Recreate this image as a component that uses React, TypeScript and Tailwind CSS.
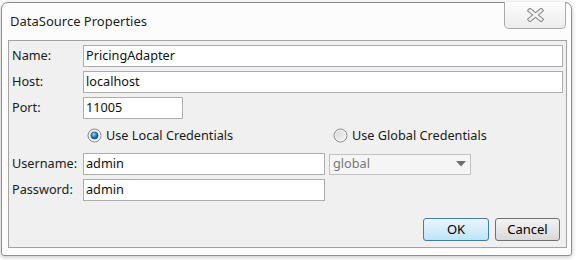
import React from "react";

const font = { fontFamily: '"Segoe UI", "Noto Sans", "Open Sans", sans-serif' };

function Radio({ checked }: { checked: boolean }) {
  const id = checked ? "rc" : "ru";
  return (
    <svg width="15" height="15" viewBox="0 0 15 15" className="shrink-0">
      <defs>
        <linearGradient id={id + "bg"} x1="0" y1="0" x2="1" y2="1">
          <stop offset="0" stopColor="#d4d4d4" />
          <stop offset="1" stopColor="#f8f8f8" />
        </linearGradient>
        <radialGradient id={id + "dot"} cx="0.4" cy="0.35" r="0.7">
          <stop offset="0" stopColor="#9fdcff" />
          <stop offset="0.45" stopColor="#2b8ad0" />
          <stop offset="1" stopColor="#0d3e66" />
        </radialGradient>
      </defs>
      <circle cx="7.5" cy="7.5" r="6.5" fill={`url(#${id}bg)`} stroke="#8c8e90" strokeWidth="1" />
      <circle cx="7.5" cy="7.5" r="5.2" fill="none" stroke="#f6f6f6" strokeWidth="1" />
      {checked && <circle cx="7.5" cy="7.5" r="3.6" fill={`url(#${id}dot)`} stroke="#1b4f7a" strokeWidth="0.6" />}
    </svg>
  );
}

function Field({ value, w }: { value: string; w: string }) {
  return (
    <div className={`${w} h-[22px] bg-white border border-[#abadb3] flex items-center pl-[2px] text-[#111]`}>
      {value}
    </div>
  );
}

export default function App() {
  return (
    <div className="w-[576px] h-[260px] bg-white relative overflow-hidden text-[12.7px] text-[#1a1a1a]" style={font}>
      <div className="absolute left-[1px] top-[2px] w-[571px] h-[254px] border border-[#8f9094] rounded-t-[7px] rounded-b-[3px] bg-[#fcfcfc] shadow-[0_1px_4px_rgba(0,0,0,0.25)] flex flex-col">
        <div className="h-[37px] flex items-start relative shrink-0">
          <div className="pl-[8px] pt-[12px] text-[13px] text-[#1e1e1e] leading-none">DataSource Properties</div>
          <div className="absolute right-[5px] top-[-1px] w-[62px] h-[27px] border border-t-0 border-[#a7a9ac] rounded-b-[5px] bg-gradient-to-b from-[#fdfdfd] to-[#ececec] flex items-center justify-center">
            <svg width="17" height="14" viewBox="0 0 17 14">
              <line x1="3" y1="2.5" x2="14" y2="11.5" stroke="#858789" strokeWidth="4.6" strokeLinecap="square" />
              <line x1="14" y1="2.5" x2="3" y2="11.5" stroke="#858789" strokeWidth="4.6" strokeLinecap="square" />
              <line x1="3" y1="2.5" x2="14" y2="11.5" stroke="#f2f2f2" strokeWidth="2.6" strokeLinecap="square" />
              <line x1="14" y1="2.5" x2="3" y2="11.5" stroke="#f2f2f2" strokeWidth="2.6" strokeLinecap="square" />
            </svg>
          </div>
        </div>
        <div className="ml-[6px] w-[559px] h-[208px] border border-[#a3a3a3] bg-[#f0f0f0] pt-[4px] pl-[3px] pr-[3px] flex flex-col">
          <div className="flex items-center">
            <div className="w-[71px]">Name:</div>
            <Field value="PricingAdapter" w="w-[480px]" />
          </div>
          <div className="flex items-center mt-[4px]">
            <div className="w-[71px]">Host:</div>
            <Field value="localhost" w="w-[480px]" />
          </div>
          <div className="flex items-center mt-[4px]">
            <div className="w-[71px]">Port:</div>
            <Field value="11005" w="w-[100px]" />
          </div>
          <div className="flex items-center h-[26px] mt-[4px]">
            <div className="w-[75px]" />
            <div className="flex items-center gap-[4px] w-[246px]">
              <Radio checked={true} />
              <span>Use Local Credentials</span>
            </div>
            <div className="flex items-center gap-[4px]">
              <Radio checked={false} />
              <span>Use Global Credentials</span>
            </div>
          </div>
          <div className="flex items-center mt-[4px]">
            <div className="w-[71px]">Username:</div>
            <Field value="admin" w="w-[242px]" />
            <div className="ml-[4px] w-[142px] h-[21px] border border-[#c2c2c2] bg-[#f5f5f5] flex items-center pl-[3px] text-[#777]">
              <span className="flex-1">global</span>
              <svg width="10" height="6" viewBox="0 0 10 6" className="mr-[4px]">
                <polygon points="0,0 10,0 5,5.5" fill="#6f6f6f" />
              </svg>
            </div>
          </div>
          <div className="flex items-center mt-[4px]">
            <div className="w-[71px]">Password:</div>
            <Field value="admin" w="w-[242px]" />
          </div>
          <div className="flex justify-end gap-[6px] mt-[17px] mr-[3px]">
            <div className="w-[66px] h-[23px] rounded-[3px] border border-[#3c7fb1] bg-gradient-to-b from-[#eaf6fd] to-[#bee4f8] flex items-center justify-center text-[13px] text-black">
              OK
            </div>
            <div className="w-[65px] h-[23px] rounded-[3px] border border-[#707070] bg-gradient-to-b from-[#f3f3f3] to-[#d9d9d9] flex items-center justify-center text-[13px] text-black">
              Cancel
            </div>
          </div>
        </div>
      </div>
    </div>
  );
}
